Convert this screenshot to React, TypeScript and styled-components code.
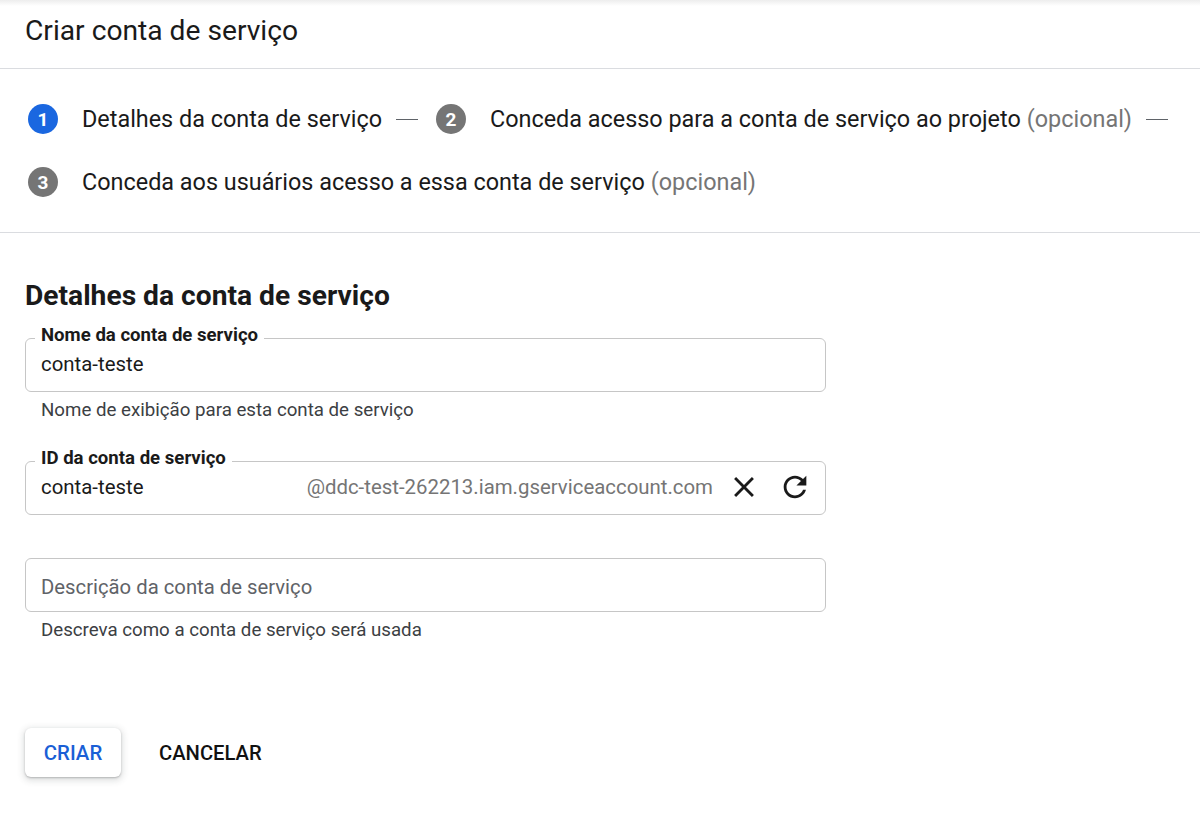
import React from "react";
import styled, { createGlobalStyle } from "styled-components";

const Global = createGlobalStyle`
  html, body { margin: 0; padding: 0; background: #fff; }
  body { font-family: Roboto, "Noto Sans", Arial, sans-serif; color: #1a1a1a; }
  * { box-sizing: border-box; }
`;

const Page = styled.div`
  width: 1200px;
  min-height: 818px;
  background: #fff;
`;

const Header = styled.header`
  height: 69px;
  display: flex;
  align-items: center;
  padding: 0 25px 8px;
  border-bottom: 1px solid #dadce0;
  background: linear-gradient(#ededed, #fff 6px);
`;

const Title = styled.h1`
  margin: 0;
  font-size: 28.2px;
  font-weight: 400;
  color: #1a1a1a;
`;

const Stepper = styled.div`
  display: flex;
  flex-wrap: wrap;
  row-gap: 33px;
  column-gap: 18px;
  padding: 35px 28px;
  border-bottom: 1px solid #dadce0;
`;

const Step = styled.div`
  display: flex;
  align-items: center;
  height: 30px;
`;

const StepNum = styled.span<{ $active?: boolean }>`
  width: 30px;
  height: 30px;
  border-radius: 50%;
  background: ${(p) => (p.$active ? "#1a67e0" : "#757575")};
  color: #fff;
  font-size: 19px;
  font-weight: 700;
  display: flex;
  align-items: center;
  justify-content: center;
  flex-shrink: 0;
`;

const StepLabel = styled.span`
  margin-left: 24px;
  font-size: 23.4px;
  color: #1a1a1a;
  white-space: nowrap;
`;

const Optional = styled.span`
  color: #757575;
  margin-left: 6px;
`;

const Dash = styled.span`
  width: 22px;
  height: 1px;
  background: #5f6368;
  margin-left: 14px;
`;

const Section = styled.section`
  padding: 47px 25px 0;
  width: 851px;
`;

const Heading = styled.h2`
  margin: 0;
  font-size: 28.2px;
  line-height: 32px;
  font-weight: 700;
  color: #1a1a1a;
`;

const Field = styled.fieldset<{ $mt: number }>`
  margin: ${(p) => p.$mt}px 0 0;
  padding: 0 13px 13px 15px;
  border: 1px solid #c6c6c6;
  border-radius: 6px;
  min-width: 0;
`;

const Legend = styled.legend`
  padding: 1px 6px 6px;
  margin-left: -6px;
  font-size: 18.6px;
  line-height: 17px;
  font-weight: 700;
  color: #1a1a1a;
`;

const PlainBox = styled.div<{ $mt: number }>`
  margin-top: ${(p) => p.$mt}px;
  height: 54px;
  border: 1px solid #c6c6c6;
  border-radius: 6px;
  padding: 3px 15px 0;
  display: flex;
  align-items: center;
`;

const Row = styled.div`
  height: 28px;
  display: flex;
  align-items: center;
`;

const Value = styled.span`
  font-size: 20.4px;
  color: #1a1a1a;
  flex: 1;
`;

const Placeholder = styled.span`
  font-size: 20.3px;
  color: #5f6368;
`;

const Suffix = styled.span`
  font-size: 20.4px;
  color: #757575;
  margin-right: 14px;
`;

const IconBtn = styled.span`
  width: 34px;
  height: 34px;
  display: flex;
  align-items: center;
  justify-content: center;
  & + & { margin-left: 17px; }
  svg { width: 34px; height: 34px; fill: #1a1a1a; }
`;

const Helper = styled.div`
  margin-top: 8px;
  padding-left: 16px;
  font-size: 18.7px;
  line-height: 20px;
  color: #3c4043;
`;

const Actions = styled.div`
  display: flex;
  align-items: center;
  gap: 38px;
  margin-top: 88px;
`;

const Primary = styled.button`
  width: 96px;
  height: 49px;
  border: none;
  border-radius: 6px;
  background: #fff;
  box-shadow: 0 1px 2px rgba(60, 64, 67, 0.3), 0 2px 6px 2px rgba(60, 64, 67, 0.15);
  font-family: inherit;
  font-size: 20.4px;
  font-weight: 500;
  color: #1a5fd6;
  cursor: pointer;
`;

const Secondary = styled.button`
  border: none;
  background: transparent;
  padding: 0;
  font-family: inherit;
  font-size: 20.2px;
  font-weight: 500;
  color: #111;
  cursor: pointer;
`;

const CloseIcon = () => (
  <svg viewBox="0 0 24 24">
    <path d="M19 6.41L17.59 5 12 10.59 6.41 5 5 6.41 10.59 12 5 17.59 6.41 19 12 13.41 17.59 19 19 17.59 13.41 12z" />
  </svg>
);

const RefreshIcon = () => (
  <svg viewBox="0 0 24 24">
    <path d="M17.65 6.35C16.2 4.9 14.21 4 12 4c-4.42 0-7.99 3.58-7.99 8s3.57 8 7.99 8c3.73 0 6.84-2.55 7.73-6h-2.08c-.82 2.33-3.04 4-5.65 4-3.31 0-6-2.690-6-6s2.690-6 6-6c1.66 0 3.14.69 4.22 1.78L13 11h7V4l-2.35 2.35z" />
  </svg>
);

export default function App() {
  return (
    <Page>
      <Global />
      <Header>
        <Title>Criar conta de serviço</Title>
      </Header>
      <Stepper>
        <Step>
          <StepNum $active>1</StepNum>
          <StepLabel>Detalhes da conta de serviço</StepLabel>
          <Dash />
        </Step>
        <Step>
          <StepNum>2</StepNum>
          <StepLabel>
            Conceda acesso para a conta de serviço ao projeto<Optional>(opcional)</Optional>
          </StepLabel>
          <Dash />
        </Step>
        <Step>
          <StepNum>3</StepNum>
          <StepLabel>
            Conceda aos usuários acesso a essa conta de serviço<Optional>(opcional)</Optional>
          </StepLabel>
        </Step>
      </Stepper>
      <Section>
        <Heading>Detalhes da conta de serviço</Heading>
        <Field $mt={14}>
          <Legend>Nome da conta de serviço</Legend>
          <Row>
            <Value>conta-teste</Value>
          </Row>
        </Field>
        <Helper>Nome de exibição para esta conta de serviço</Helper>
        <Field $mt={29}>
          <Legend>ID da conta de serviço</Legend>
          <Row>
            <Value>conta-teste</Value>
            <Suffix>@ddc-test-262213.iam.gserviceaccount.com</Suffix>
            <IconBtn><CloseIcon /></IconBtn>
            <IconBtn><RefreshIcon /></IconBtn>
          </Row>
        </Field>
        <PlainBox $mt={43}>
          <Placeholder>Descrição da conta de serviço</Placeholder>
        </PlainBox>
        <Helper>Descreva como a conta de serviço será usada</Helper>
        <Actions>
          <Primary>CRIAR</Primary>
          <Secondary>CANCELAR</Secondary>
        </Actions>
      </Section>
    </Page>
  );
}
